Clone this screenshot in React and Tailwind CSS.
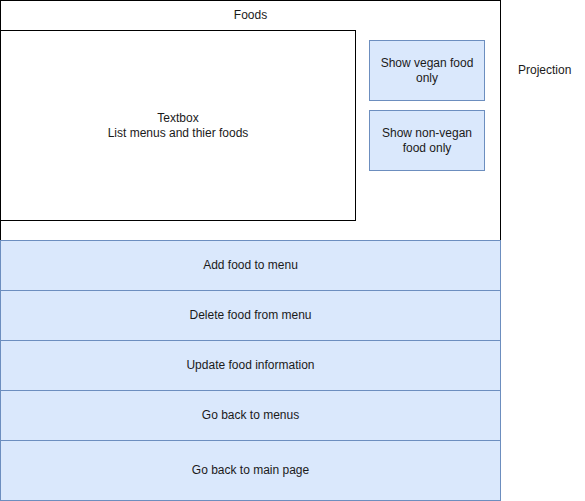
import React from "react";

const rows = [
  { label: "Add food to menu", h: "h-[50px]" },
  { label: "Delete food from menu", h: "h-[50px]" },
  { label: "Update food information", h: "h-[50px]" },
  { label: "Go back to menus", h: "h-[50px]" },
  { label: "Go back to main page", h: "h-[61px] border-b" },
];

const App = () => {
  return (
    <div className="w-[585px] h-[501px] bg-white flex text-[12px] leading-[15px] text-[#1a1a1a] font-['Liberation_Sans',Arial,sans-serif]">
      <div className="w-[501px] flex flex-col">
        {/* Foods panel */}
        <div className="h-[240px] border-t border-l border-r border-black flex flex-col">
          <div className="h-[29px] flex items-center justify-center">Foods</div>
          <div className="flex">
            <div className="w-[355px] h-[191px] border-t border-r border-b border-black flex flex-col items-center justify-center text-center">
              <span>Textbox</span>
              <span>List menus and thier foods</span>
            </div>
            <div className="ml-[13px] mt-[10px] flex flex-col gap-[9px]">
              <button className="w-[116px] h-[61px] bg-[#dae8fc] border border-[#6c8ebf] flex items-center justify-center text-center px-2">
                Show vegan food only
              </button>
              <button className="w-[116px] h-[61px] bg-[#dae8fc] border border-[#6c8ebf] flex items-center justify-center text-center px-2">
                Show non-vegan food only
              </button>
            </div>
          </div>
        </div>

        {/* Actions */}
        {rows.map((r) => (
          <div
            key={r.label}
            className={`${r.h} bg-[#dae8fc] border-t border-l border-r border-[#6c8ebf] flex items-center justify-center`}
          >
            {r.label}
          </div>
        ))}
      </div>
      <div className="flex-1 pt-[63px] pl-[17px]">Projection</div>
    </div>
  );
};

export default App;
